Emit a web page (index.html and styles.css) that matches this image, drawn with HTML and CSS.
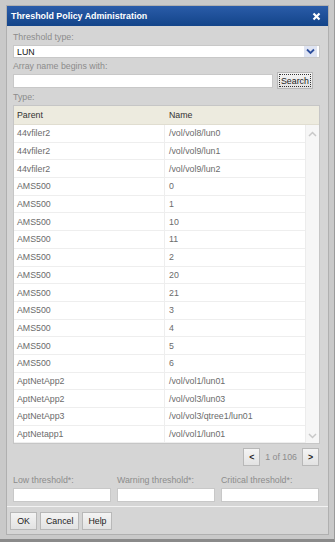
FILE: index.html
```html
<!DOCTYPE html>
<html lang="en">
<head>
    <meta charset="UTF-8">
    <title>Threshold Policy Administration</title>
    <link rel="stylesheet" href="styles.css">
</head>
<body>
    <div class="marco">
        <div class="ventana">
            <div class="titulo">
                <span>Threshold Policy Administration</span>
                <span class="cerrar">
                    <svg width="9" height="9" viewBox="0 0 9 9"><path d="M1.5 1.5 L7.5 7.5 M7.5 1.5 L1.5 7.5" stroke="#fff" stroke-width="2.2"/></svg>
                </span>
            </div>

            <div class="cuerpo">
                <label class="etiqueta">Threshold type:</label>
                <div class="combo">
                    <span>LUN</span>
                    <span class="flecha">
                        <svg width="9" height="7" viewBox="0 0 9 7"><path d="M1 1.5 L4.5 5 L8 1.5" stroke="#2d4f9e" stroke-width="1.8" fill="none"/></svg>
                    </span>
                </div>

                <label class="etiqueta">Array name begins with:</label>
                <div class="fila-buscar">
                    <input class="campo" type="text">
                    <button class="boton buscar">Search</button>
                </div>

                <label class="etiqueta">Type:</label>
                <div class="tabla">
                    <div class="cabecera">
                        <div class="col1">Parent</div>
                        <div class="col2">Name</div>
                    </div>
                    <div class="contenido">
                        <div class="filas">
                            <div class="fila"><div class="col1">44vfiler2</div><div class="col2">/vol/vol8/lun0</div></div>
                            <div class="fila"><div class="col1">44vfiler2</div><div class="col2">/vol/vol9/lun1</div></div>
                            <div class="fila"><div class="col1">44vfiler2</div><div class="col2">/vol/vol9/lun2</div></div>
                            <div class="fila"><div class="col1">AMS500</div><div class="col2">0</div></div>
                            <div class="fila"><div class="col1">AMS500</div><div class="col2">1</div></div>
                            <div class="fila"><div class="col1">AMS500</div><div class="col2">10</div></div>
                            <div class="fila"><div class="col1">AMS500</div><div class="col2">11</div></div>
                            <div class="fila"><div class="col1">AMS500</div><div class="col2">2</div></div>
                            <div class="fila"><div class="col1">AMS500</div><div class="col2">20</div></div>
                            <div class="fila"><div class="col1">AMS500</div><div class="col2">21</div></div>
                            <div class="fila"><div class="col1">AMS500</div><div class="col2">3</div></div>
                            <div class="fila"><div class="col1">AMS500</div><div class="col2">4</div></div>
                            <div class="fila"><div class="col1">AMS500</div><div class="col2">5</div></div>
                            <div class="fila"><div class="col1">AMS500</div><div class="col2">6</div></div>
                            <div class="fila"><div class="col1">AptNetApp2</div><div class="col2">/vol/vol1/lun01</div></div>
                            <div class="fila"><div class="col1">AptNetApp2</div><div class="col2">/vol/vol3/lun03</div></div>
                            <div class="fila"><div class="col1">AptNetApp3</div><div class="col2">/vol/vol3/qtree1/lun01</div></div>
                            <div class="fila"><div class="col1">AptNetapp1</div><div class="col2">/vol/vol1/lun01</div></div>
                        </div>
                        <div class="barra">
                            <svg width="9" height="6" viewBox="0 0 9 6"><path d="M1 5 L4.5 1.5 L8 5" stroke="#c8c8c8" stroke-width="1.5" fill="none"/></svg>
                            <svg width="9" height="6" viewBox="0 0 9 6"><path d="M1 1 L4.5 4.5 L8 1" stroke="#c8c8c8" stroke-width="1.5" fill="none"/></svg>
                        </div>
                    </div>
                </div>

                <div class="paginas">
                    <button class="boton mini">&lt;</button>
                    <span>1 of 106</span>
                    <button class="boton mini">&gt;</button>
                </div>

                <div class="umbrales">
                    <div class="umbral">
                        <label class="etiqueta">Low threshold*:</label>
                        <input class="campo" type="text">
                    </div>
                    <div class="umbral">
                        <label class="etiqueta">Warning threshold*:</label>
                        <input class="campo" type="text">
                    </div>
                    <div class="umbral">
                        <label class="etiqueta">Critical threshold*:</label>
                        <input class="campo" type="text">
                    </div>
                </div>
            </div>

            <div class="pie">
                <button class="boton">OK</button>
                <button class="boton">Cancel</button>
                <button class="boton">Help</button>
            </div>
        </div>
    </div>
</body>
</html>
```

FILE: styles.css
```css
body {
    margin: 0;
    font-family: "Liberation Sans", Arial, sans-serif;
    font-size: 8.8px;
    color: #444;
    background: #fff;
}

.marco {
    width: 335px;
    height: 542px;
    box-sizing: border-box;
    padding: 5px 5px 4px 6px;
    background: #c9c9c9;
    border-bottom: 3px solid #8a8a8a;
    border-right: 1px solid #9a9a9a;
}

.ventana {
    height: 100%;
    box-sizing: border-box;
    background: #d5d5d5;
    border: 1px solid #b0b0b0;
    display: flex;
    flex-direction: column;
}

.titulo {
    height: 20px;
    flex-shrink: 0;
    background: linear-gradient(#2a5ca9, #134489);
    color: #fff;
    font-weight: bold;
    font-size: 8.9px;
    display: flex;
    align-items: center;
    justify-content: space-between;
    padding: 0 7px 0 4px;
}

.cerrar {
    display: flex;
}

.cuerpo {
    padding: 3px 8px 0 6px;
    flex: 1;
}

.etiqueta {
    display: block;
    color: #8c8c8c;
    height: 16px;
    line-height: 17px;
}

.combo {
    height: 11px;
    background: #fff;
    border: 1px solid #c8c8c8;
    display: flex;
    align-items: center;
    justify-content: space-between;
    padding: 0 2px 0 3px;
    color: #111;
}

.flecha {
    width: 13px;
    height: 11px;
    background: #dfe4f2;
    display: flex;
    align-items: center;
    justify-content: center;
}

.fila-buscar {
    display: flex;
    align-items: flex-start;
    gap: 4px;
    height: 15px;
}

.campo {
    display: block;
    box-sizing: border-box;
    height: 14px;
    border: 1px solid #c8c8c8;
    background: #fff;
    margin: 0;
    padding: 0;
}

.fila-buscar .campo {
    width: 260px;
}

.boton {
    font-family: "Liberation Sans", Arial, sans-serif;
    font-size: 8.8px;
    color: #222;
    background: linear-gradient(#f4f4f4, #e2e2e2);
    border: 1px solid #b8b8b8;
    padding: 0 5px;
    height: 18px;
}

.buscar {
    outline: 1px dotted #333;
    outline-offset: -3px;
    height: 17px;
    padding: 0 3px;
    margin-top: -2px;
}

.tabla {
    border: 1px solid #c6c6c6;
    background: #fff;
    width: 307px;
    box-sizing: border-box;
}

.cabecera {
    display: flex;
    height: 18px;
    align-items: center;
    background: #edebdf;
    color: #333;
    border-bottom: 1px solid #e0ddd0;
}

.col1 {
    width: 151px;
    padding-left: 3px;
    box-sizing: border-box;
}

.col2 {
    padding-left: 4px;
    flex: 1;
}

.contenido {
    display: flex;
}

.filas {
    flex: 1;
}

.fila {
    display: flex;
    height: 17.7px;
    align-items: center;
    color: #6b6b6b;
    border-bottom: 1px solid #eeeeee;
    box-sizing: border-box;
}

.fila .col1 {
    border-right: 1px solid #eeeeee;
    height: 100%;
    display: flex;
    align-items: center;
}

.barra {
    width: 13px;
    background: #f6f6f6;
    border-left: 1px solid #ececec;
    display: flex;
    flex-direction: column;
    justify-content: space-between;
    align-items: center;
    padding: 6px 0 4px;
}

.paginas {
    display: flex;
    justify-content: flex-end;
    align-items: center;
    gap: 4px;
    height: 19px;
    margin-top: 3px;
    color: #8c8c8c;
    padding-right: 1px;
}

.paginas span {
    padding: 0 1px;
}

.mini {
    width: 17px;
    height: 18px;
    padding: 0;
    font-weight: bold;
}

.umbrales {
    display: flex;
    gap: 6px;
    margin-top: 6px;
}

.umbral {
    width: 98px;
}

.umbral .campo {
    width: 98px;
}

.pie {
    border-top: 1px solid #f2f2f2;
    padding: 5px 3px 4px;
    display: flex;
    gap: 3px;
}

.pie .boton {
    height: 18px;
    min-width: 27px;
}
```
